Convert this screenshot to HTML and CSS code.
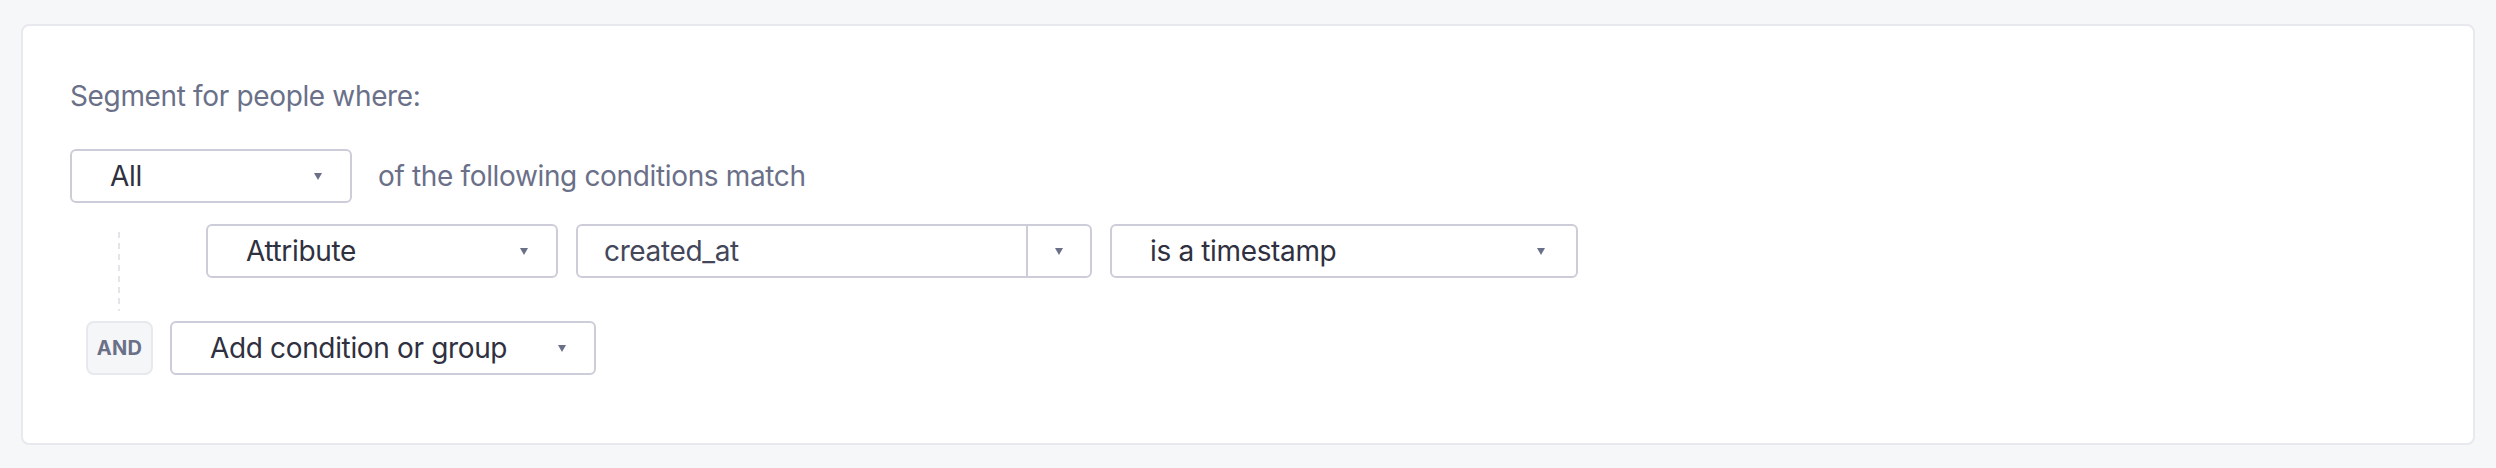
FILE: index.html
```html
<!DOCTYPE html>
<html lang="en">
<head>
  <meta charset="UTF-8">
  <meta name="viewport" content="width=device-width, initial-scale=1.0">
  <title>Segment builder</title>
  <link rel="stylesheet" href="styles.css">
</head>

<body>

  <div class="card">
    <p class="label">Segment for people where:</p>

    <div class="match-row">
      <div class="select select-match">
        <span>All</span>
        <span class="caret"></span>
      </div>
      <span class="label">of the following conditions match</span>
    </div>

    <!-- Condition group -->
    <div class="group">
      <div class="condition">
        <div class="select select-type">
          <span>Attribute</span>
          <span class="caret"></span>
        </div>

        <div class="combo">
          <span class="combo-input">created_at</span>
          <span class="combo-toggle"><span class="caret"></span></span>
        </div>

        <div class="select select-op">
          <span>is a timestamp</span>
          <span class="caret"></span>
        </div>
      </div>
    </div>

    <div class="add-row">
      <span class="badge">AND</span>
      <div class="select select-add">
        <span>Add condition or group</span>
        <span class="caret"></span>
      </div>
    </div>
  </div>

</body>
</html>
```

FILE: styles.css
```css
/* General Reset */
* {
  margin: 0;
  padding: 0;
  box-sizing: border-box;
}

body {
  font-family: 'Inter', 'Noto Sans', sans-serif;
  background: #f6f7f9;
  color: #2f3040;
  font-size: 28px;
  line-height: 40px;
  letter-spacing: -0.35px;
}

/* Card */
.card {
  margin: 24px 21px 23px;
  background: #fff;
  border: 2px solid #e8e9ee;
  border-radius: 8px;
  padding: 50px 48px 68px 47px;
}

.label {
  color: #6b7089;
}

/* Selects */
.select {
  display: flex;
  align-items: center;
  justify-content: space-between;
  height: 54px;
  padding: 0 28px 0 38px;
  border: 2px solid #cdcdd9;
  border-radius: 6px;
  background: #fff;
}

.caret {
  width: 0;
  height: 0;
  border-left: 4px solid transparent;
  border-right: 4px solid transparent;
  border-top: 7px solid #6b7089;
}

.match-row {
  display: flex;
  align-items: center;
  gap: 26px;
  margin-top: 33px;
}

.select-match {
  width: 282px;
}

/* Condition group */
.group {
  position: relative;
  margin-top: 21px;
  padding-left: 136px;
}

.group::before {
  content: '';
  position: absolute;
  left: 48px;
  top: 8px;
  bottom: -33px;
  width: 2px;
  background: repeating-linear-gradient(#e4e5ea 0 6px, transparent 6px 11px);
}

.condition {
  display: flex;
  gap: 18px;
}

.select-type {
  width: 352px;
}

.combo {
  display: flex;
  width: 516px;
  height: 54px;
  border: 2px solid #cdcdd9;
  border-radius: 6px;
}

.combo-input {
  flex: 1;
  display: flex;
  align-items: center;
  padding-left: 26px;
  color: #44465a;
}

.combo-toggle {
  display: flex;
  align-items: center;
  justify-content: center;
  width: 64px;
  border-left: 2px solid #cdcdd9;
}

.select-op {
  width: 468px;
  padding-right: 31px;
}

/* Add row */
.add-row {
  display: flex;
  align-items: center;
  gap: 17px;
  margin-top: 43px;
  padding-left: 16px;
}

.badge {
  display: flex;
  align-items: center;
  justify-content: center;
  width: 67px;
  height: 54px;
  background: #f5f6f8;
  border: 2px solid #e8e9ee;
  border-radius: 8px;
  color: #6b7089;
  font-size: 20px;
  font-weight: 700;
  letter-spacing: 0.3px;
}

.select-add {
  width: 426px;
}
```
